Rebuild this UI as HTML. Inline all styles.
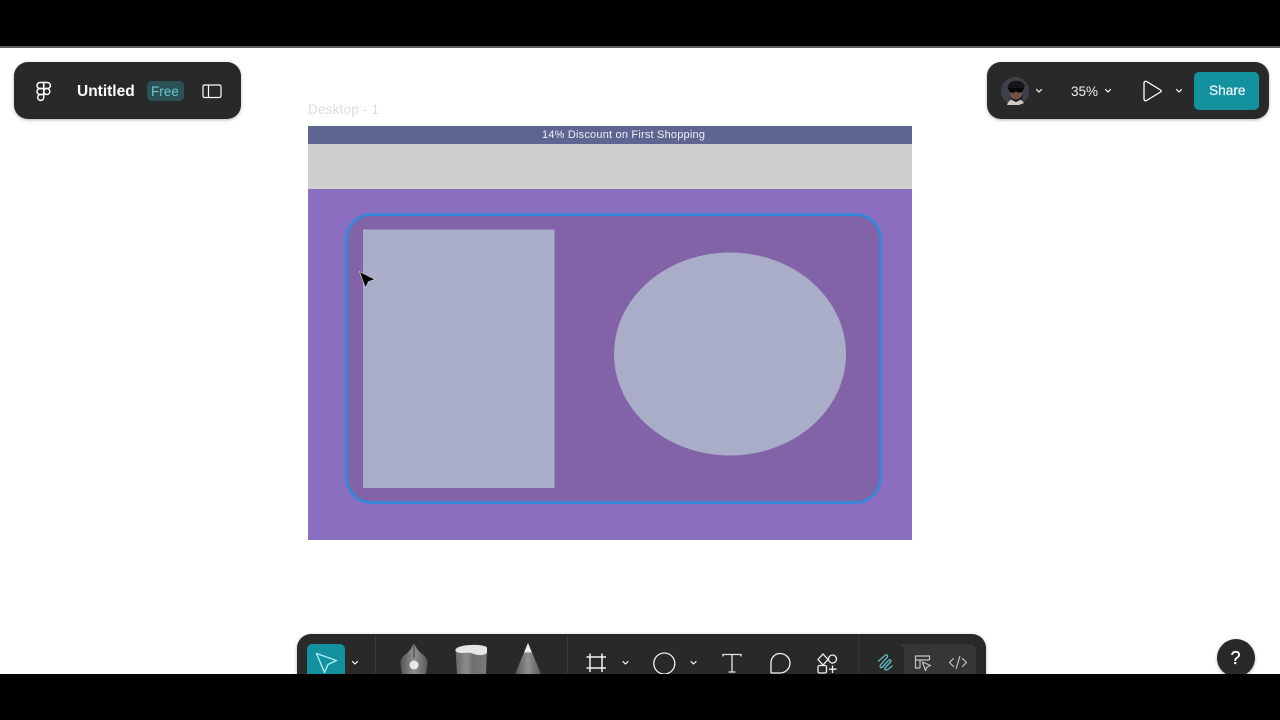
<!DOCTYPE html>
<html>
<head>
<meta charset="utf-8">
<style>
html,body{margin:0;padding:0;width:1280px;height:720px;overflow:hidden;background:#fff;font-family:"Liberation Sans",sans-serif}
.a{position:absolute}
.panel{background:#292929;box-shadow:0 1px 3px rgba(0,0,0,.3)}
.t{position:absolute;white-space:nowrap;line-height:1}
svg{position:absolute;left:0;top:0}
</style>
</head>
<body>
<div class="a" style="left:308px;top:126px;width:604px;height:414px;background:#8b6ec0"></div>
<div class="a" style="left:308px;top:126px;width:604px;height:18px;background:#5d6590"></div>
<div class="a" style="left:308px;top:144px;width:604px;height:45px;background:#cfcfcf"></div>
<div class="t" style="left:542px;top:130px;font-size:11px;color:#eef0f6;letter-spacing:.2px">14% Discount on First Shopping</div>
<div class="t" style="left:308px;top:102.5px;font-size:13.5px;color:#dcdcdc;letter-spacing:.2px">Desktop - 1</div>

<div class="a panel" style="left:14px;top:62px;width:226.5px;height:57px;border-radius:14px"></div>
<div class="a panel" style="left:987px;top:62px;width:282px;height:57px;border-radius:14px"></div>
<div class="a panel" style="left:297px;top:634px;width:689px;height:60px;border-radius:14px 14px 0 0"></div>
<div class="a panel" style="left:1217px;top:639px;width:38px;height:38px;border-radius:50%"></div>

<div class="t" style="left:77px;top:84px;font-size:15.5px;font-weight:bold;color:#fff">Untitled</div>
<div class="a" style="left:147px;top:81px;width:37px;height:20px;border-radius:5px;background:#2c5258"></div>
<div class="t" style="left:151px;top:84.5px;font-size:13.5px;color:#6cc5cd">Free</div>
<div class="t" style="left:1071px;top:84.5px;font-size:13.5px;color:#eee">35%</div>
<div class="a" style="left:1194px;top:72px;width:65px;height:38px;border-radius:5px;background:#14919f"></div>
<div class="t" style="left:1209px;top:84px;font-size:13.7px;color:#e8f6f7;-webkit-text-stroke:.25px #e8f6f7">Share</div>
<div class="a" style="left:307px;top:644px;width:38px;height:40px;border-radius:5px;background:#14919f"></div>
<div class="a" style="left:868px;top:644px;width:108px;height:40px;border-radius:6px;background:#363636"></div>
<div class="a" style="left:868px;top:644px;width:36px;height:40px;border-radius:6px;background:#292929"></div>

<svg width="1280" height="720" viewBox="0 0 1280 720" fill="none">
<defs>
<linearGradient id="g1" x1="0" x2="1" y1="0" y2="0"><stop offset="0" stop-color="#555"/><stop offset=".5" stop-color="#909090"/><stop offset="1" stop-color="#5a5a5a"/></linearGradient>
<linearGradient id="g2" x1="0" x2="1" y1="0" y2="0"><stop offset="0" stop-color="#666"/><stop offset=".35" stop-color="#8e8e8e"/><stop offset=".55" stop-color="#6e6e6e"/><stop offset="1" stop-color="#7a7a7a"/></linearGradient>
</defs>
<!-- canvas shapes -->
<rect x="346.5" y="214.5" width="534" height="288" rx="25" fill="#8263a8" stroke="#3a86d6" stroke-width="3"/>
<rect x="363" y="229.500" width="191.500" height="258.500" fill="#a9adc8"/>
<ellipse cx="730" cy="354" rx="116" ry="101.500" fill="#a9adc8"/>
<!-- cursor -->
<path d="M359.500 271.500L375 279.500L368.500 281.500L365.500 288Z" fill="#000" stroke="#ddd" stroke-width=".6"/>
<!-- figma logo -->
<g stroke="#fff" stroke-width="1.500">
<path d="M43.700 82.500H40a3 3 0 0 0 0 6H43.700Z"/>
<path d="M43.700 82.500H47.400a3 3 0 0 1 0 6H43.700Z"/>
<path d="M43.700 88.500H40a3 3 0 0 0 0 6H43.700Z"/>
<circle cx="46.800" cy="91.500" r="3"/>
<path d="M43.700 94.500H40a3 3 0 1 0 3.700 2.900Z"/>
</g>
<!-- sidebar -->
<rect x="203" y="85" width="18" height="12.500" rx="1.500" stroke="#fff" stroke-width="1.200"/>
<path d="M208.500 85V97.500" stroke="#fff" stroke-width="1.200"/>
<!-- chevrons -->
<g stroke="#fff" stroke-width="1.200" stroke-linecap="round" stroke-linejoin="round">
<path d="M1036.500 89.500L1039 92L1041.500 89.500"/>
<path d="M1105.500 89.500L1108 92L1110.500 89.500"/>
<path d="M1176.500 89.500L1179 92L1181.500 89.500"/>
<path d="M352.500 661.500L355 664L357.500 661.500"/>
<path d="M623 661.500L625.500 664L628 661.500"/>
<path d="M691 661.500L693.500 664L696 661.500"/>
</g>
<!-- avatar -->
<circle cx="1015" cy="91" r="14" fill="#3d4249"/>
<path d="M1007 105C1008 101 1011 99 1015 99S1022 100 1024 103L1019 105Z" fill="#cfc9c2"/>
<ellipse cx="1016" cy="92" rx="6.500" ry="8" fill="#6f5446"/>
<path d="M1008 89C1006 80 1022 77 1025 86L1023 90L1010 90Z" fill="#15151a"/>
<path d="M1008 88H1024L1022 92.500H1017L1016 90.500L1015 92.500H1010Z" fill="#050505"/>
<path d="M1010 96C1013 101 1020 101 1023 94L1022 99L1016 102L1012 100Z" fill="#1c1715"/>
<!-- play -->
<path d="M1144 83C1144 81.500 1145.500 81 1146.500 81.500L1160.500 90C1161.500 90.600 1161.500 91.400 1160.500 92L1146.500 100.500C1145.500 101 1144 100.500 1144 99Z" stroke="#fff" stroke-width="1.300"/>
<!-- move tool -->
<path d="M316.500 653.500L336.500 660.500L328 664.500L324.500 672.500Z" stroke="#aef0f4" stroke-width="1.300" stroke-linejoin="round"/>
<!-- separators -->
<path d="M375.500 635V674M567.500 635V674M859 635V674" stroke="#3a3a3a"/>
<!-- pen -->
<path d="M414 642.500C416 648 419 652 424 655.500C426.500 658 428 661 427.500 664L426 674H402L400.500 664C400 661 401.500 658 404 655.500C409 652 412 648 414 642.500Z" fill="url(#g1)"/>
<path d="M414 643V658" stroke="#3a3a3a" stroke-width="1"/>
<circle cx="414" cy="665" r="4.500" fill="#e8e8e8"/>
<!-- marker -->
<path d="M455.500 649C459 644 483 644 487 647.500L486 674H457Z" fill="url(#g2)"/>
<path d="M455.500 650C456 644.500 483 643 487 647.500V653C482 656.500 476 655 471 653C466 651.500 460 655 455.500 651Z" fill="#e6e6e6"/>
<!-- pencil -->
<path d="M528 643L541 674H515Z" fill="url(#g1)"/>
<path d="M528 643L532 653C530 652 526 652 524 653Z" fill="#f2f2f2"/>
<!-- frame tool -->
<g stroke="#f2f2f2" stroke-width="1.300">
<path d="M590 653.500V672M602 653.500V672M586.500 657H606M586.500 668H606" stroke-width="1.500"/>
<circle cx="664.300" cy="663.500" r="10.500" stroke-width="1.300"/>
<path d="M723 656.500V654.500H741V656.500M732 654.500V672M728.500 672H735.500" stroke="#e6e6e6"/>
<path d="M771 673V663C771 657 775.500 653.500 780 653.500C785.500 653.500 790 658 790 663C790 668.500 785.500 673 780 673Z" stroke-linejoin="round"/>
<path d="M823 654L828 659.500L823 665L818 659.500Z"/>
<circle cx="832.500" cy="659" r="4"/>
<rect x="818" y="665.500" width="8.500" height="7.500" rx="1.500"/>
<path d="M832.500 665.500V673M829 669.200H836.500"/>
</g>
<!-- draw mode -->
<path d="M878.500 661L885 655.500C886.500 654 888.500 655.500 887 657.500L880.500 665C879.500 667 881 668.500 882.500 667L888.500 660.500C890 659 892 660.500 890.500 662L885 668C884 670 886.500 670.500 888.500 669L892 666" stroke="#5fbcc8" stroke-width="1.300" stroke-linecap="round" stroke-linejoin="round"/>
<!-- dev/component -->
<g stroke="#c4c4c4" stroke-width="1.200" stroke-linejoin="round">
<path d="M920 668H915.500V656H929.500V660M915.500 660H929.500M920 660V668"/>
<path d="M922.500 662L930.500 665.500L927 667L925.500 670.500Z"/>
<path d="M953.500 658.500L949.500 662.500L953.500 666.500M962.500 658.500L966.500 662.500L962.500 666.500M959.800 656.500L956.200 668.500" stroke-linecap="round"/>
</g>
</svg>
<div class="t" style="left:1230.500px;top:648.500px;font-size:18px;color:#fff;-webkit-text-stroke:.3px #fff">?</div>
<!-- video letterbox -->
<div class="a" style="left:0;top:0;width:1280px;height:46px;background:#000"></div>
<div class="a" style="left:0;top:46px;width:1280px;height:2px;background:#5e5e5e"></div>
<div class="a" style="left:0;top:674px;width:1280px;height:46px;background:#000"></div>
</body>
</html>
